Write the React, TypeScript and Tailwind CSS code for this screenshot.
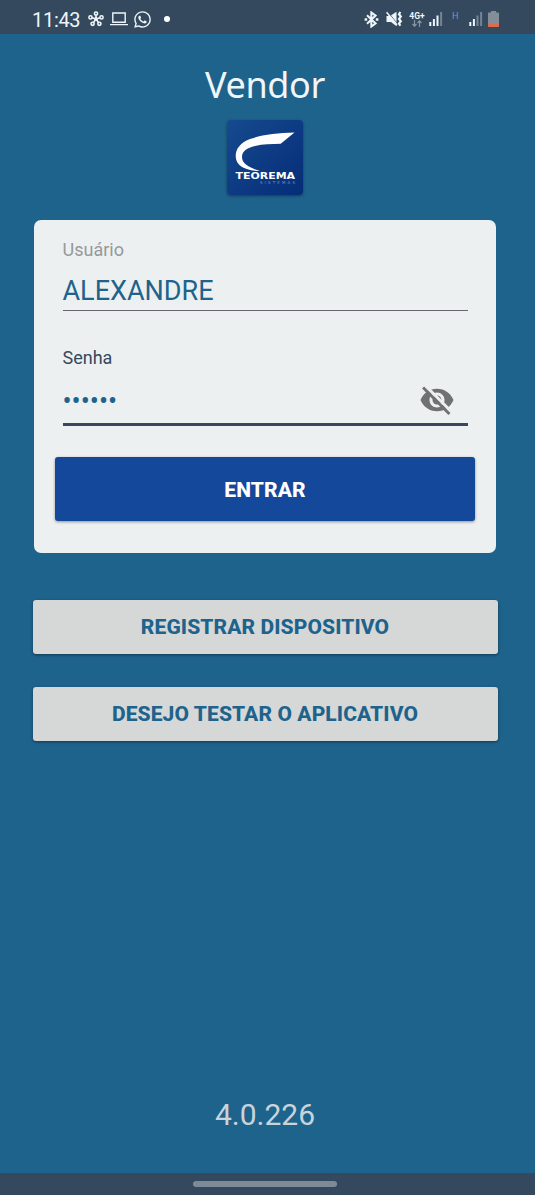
import React, { useState } from 'react';
import { FaWhatsapp } from 'react-icons/fa';

const HubIcon = () => (
  <svg viewBox="0 0 16 16" className="h-4 w-4" fill="none" stroke="currentColor" strokeWidth="1.6">
    <path d="M8 8V4M8 8L4 6.8M8 8l4-1.2M8 8l-2.6 3.6M8 8l2.6 3.6" />
    <circle cx="8" cy="2.6" r="1.6" />
    <circle cx="2.5" cy="6.4" r="1.6" />
    <circle cx="13.5" cy="6.4" r="1.6" />
    <circle cx="4.6" cy="12.8" r="1.6" />
    <circle cx="11.4" cy="12.8" r="1.6" />
    <circle cx="8" cy="8" r="1.8" fill="currentColor" stroke="none" />
  </svg>
);

const LaptopIcon = () => (
  <svg viewBox="0 0 18 14" className="h-3.5 w-[18px]" fill="none" stroke="currentColor" strokeWidth="1.4">
    <path d="M2.8 1h12.4v9.3H2.8zM0 12.6h18" />
  </svg>
);

const BluetoothIcon = () => (
  <svg viewBox="0 0 15 17" className="h-[17px] w-[15px]" fill="none" stroke="currentColor" strokeWidth="2">
    <path d="M3 4.3l8.6 8.1-4.3 3.2V1.4l4.3 3.2L3 12.7" />
    <path d="M.6 8.5h2.6M11.8 8.5h2.6" strokeWidth="2.4" />
  </svg>
);

const MuteVibrateIcon = () => (
  <svg viewBox="0 0 17 16" className="h-4 w-[17px]">
    <path d="M.5 5h3.5L10.5.8v14.4L5 11H.5z" fill="currentColor" />
    <path d="M1.5.5l11 13.5" stroke="#34495e" strokeWidth="0.8" />
    <path d="M.6 1.2l10.4 12.8" stroke="currentColor" strokeWidth="1.5" />
    <path
      d="M14.3 1l-1.3 2.3 1.8 2.3-1.8 2.3 1.8 2.3-1.8 2.3 1.3 2.3"
      fill="none"
      stroke="currentColor"
      strokeWidth="2.2"
    />
  </svg>
);

const SignalIcon = ({ level }: { level: number }) => (
  <svg viewBox="0 0 14 14" className="h-3.5 w-3.5" fill="currentColor">
    {[4, 7, 10.5, 14].map((height, index) => (
      <rect
        key={index}
        x={index * 3.6 + 0.3}
        y={14 - height}
        width="2"
        height={height}
        opacity={index < level ? 1 : 0.35}
      />
    ))}
  </svg>
);

const BatteryIcon = () => (
  <svg viewBox="0 0 11 16" className="h-4 w-[11px]">
    <path d="M3 0h5v1.5h2.2q.8 0 .8.8V13H0V2.3q0-.8.8-.8H3z" fill="#848e98" />
    <path d="M0 13h11v2.2q0 .8-.8.8H.8q-.8 0-.8-.8z" fill="#de6b4b" />
  </svg>
);

const StatusBar = () => (
  <header className="flex h-[34px] items-center bg-[#34495e] pt-1 pl-[32px] text-[#eef5fa]">
    <span className="w-14 pt-0.5 text-[20px] leading-none tracking-[-0.3px]">11:43</span>
    <HubIcon />
    <div className="ml-1.5">
      <LaptopIcon />
    </div>
    <FaWhatsapp className="ml-[5px] h-[19px] w-[19px]" />
    <span className="ml-[12px] h-1.5 w-1.5 rounded-full bg-white" />

    <div className="ml-auto flex items-center pr-[36px]">
      <BluetoothIcon />
      <div className="ml-[7px]">
        <MuteVibrateIcon />
      </div>
      <div className="ml-[6px] flex w-4 flex-col items-center">
        <span className="text-[8.5px] leading-[8px] font-bold">4G+</span>
        <svg viewBox="0 0 10 7" className="h-[7px] w-2.5" fill="none" stroke="#8995a0" strokeWidth="1.2">
          <path d="M2.5 0v6M.5 4l2 2.2 2-2.2M7.5 7V1M5.5 3l2-2.2 2 2.2" />
        </svg>
      </div>
      <div className="ml-1">
        <SignalIcon level={3} />
      </div>
      <span className="mb-1.5 ml-[9px] w-[17px] text-[9px] leading-none text-[#8995a0]">H</span>
      <SignalIcon level={2} />
      <div className="ml-[5px]">
        <BatteryIcon />
      </div>
    </div>
  </header>
);

const Logo = () => (
  <svg viewBox="0 0 76 75" className="h-[75px] w-[76px] rounded-[4px] shadow-[0_1px_3px_rgba(0,0,0,0.4)]">
    <defs>
      <linearGradient id="logo-bg" x1="0" y1="0" x2="1" y2="1">
        <stop offset="0" stopColor="#164a8e" />
        <stop offset="1" stopColor="#052d78" />
      </linearGradient>
    </defs>
    <rect width="76" height="75" fill="url(#logo-bg)" />
    <path
      d="M67.5 12.5C50 13 34 15 23 19C13 23 8.7 29 8.7 36C9 42 11.5 45 16 47.5C21 50 27 51 33 51C23 48 15 44 15 37C15 31 20 28 28 26C36 24 44 24 53.7 23.8Z"
      fill="#fff"
    />
    <text
      x="8.5"
      y="59.2"
      textLength="59.5"
      lengthAdjust="spacingAndGlyphs"
      fill="#fff"
      className="font-['DejaVu_Sans',sans-serif] text-[8px] font-bold"
    >
      TEOREMA
    </text>
    <text x="33" y="64" textLength="35" fill="#6f92c4" className="font-['DejaVu_Sans',sans-serif] text-[4px]">
      SISTEMAS
    </text>
  </svg>
);

const EyeOffIcon = () => (
  <svg viewBox="0 0 24 24" className="h-9 w-9">
    <path
      fill="#6f7172"
      d="M12 4.5C7 4.5 2.73 7.61 1 12c1.73 4.39 6 7.5 11 7.5s9.27-3.11 11-7.5c-1.73-4.39-6-7.5-11-7.5zM12 17c-2.76 0-5-2.24-5-5s2.24-5 5-5 5 2.24 5 5-2.24 5-5 5zM12 9c-1.66 0-3 1.34-3 3s1.34 3 3 3 3-1.34 3-3-1.34-3-3-3z"
    />
    <path d="M4.2 2.4L22 20.2" stroke="#ecf0f1" strokeWidth="2" />
    <path d="M2.7 3.7L20.3 21.3" stroke="#6f7172" strokeWidth="1.9" />
  </svg>
);

const secondaryButton =
  'h-[54px] w-full rounded-[3px] bg-[#d6d7d7] pt-[3px] text-[21px] font-extrabold tracking-[0.1px] text-[#1e638c] shadow-[0_1px_3px_rgba(0,0,0,0.45)]';

const App = () => {
  const [showPassword, setShowPassword] = useState(false);

  return (
    <div className="flex h-[1195px] w-[535px] flex-col overflow-hidden bg-[#1e638c] font-[Roboto,sans-serif]">
      <StatusBar />

      <main className="flex flex-1 flex-col items-center pr-[5px]">
        <h1 className="mt-[25px] h-[51px] font-['Noto_Sans',sans-serif] text-[36px] leading-[52px] tracking-[-0.4px] text-[#f0f6fa]">
          Vendor
        </h1>
        <div className="mt-[9.5px]">
          <Logo />
        </div>

        {/* Login card */}
        <form className="mt-[25px] flex h-[333.5px] w-[462px] flex-col rounded-[7px] bg-[#ecf0f1] px-[21px]">
          <div className="mx-[7.5px] flex h-[91.5px] flex-col border-b border-[#69676d] pt-[19px]">
            <span className="text-[18px] leading-[21px] text-[#95999b]">Usuário</span>
            <span className="mt-[15px] text-[27px] leading-8 text-[#1e638c]">ALEXANDRE</span>
          </div>
          <div className="mx-[7.5px] flex h-[114.5px] flex-col border-b-[3px] border-[#34495e] pt-[36px]">
            <span className="text-[18px] leading-[21px] text-[#34495e]">Senha</span>
            <div className="mt-[13px] flex items-center justify-between pr-[13px]">
              <span className="pt-0.5 text-[27px] leading-9 text-[#1e638c]">{showPassword ? '123456' : '••••••'}</span>
              <button type="button" onClick={() => setShowPassword(!showPassword)} aria-label="Mostrar senha">
                <EyeOffIcon />
              </button>
            </div>
          </div>
          <button
            type="button"
            className="mt-[31.5px] h-16 w-full rounded-[3px] bg-[#14489b] pt-[3px] text-[21px] font-extrabold tracking-[0.1px] text-white shadow-[0_1px_3px_rgba(0,0,0,0.4)]"
          >
            ENTRAR
          </button>
        </form>

        <div className="mt-[46.5px] flex w-[465px] flex-col gap-[33px]">
          <button className={secondaryButton}>REGISTRAR DISPOSITIVO</button>
          <button className={secondaryButton}>DESEJO TESTAR O APLICATIVO</button>
        </div>

        <span className="mt-auto mb-10 text-[30px] leading-9 text-[#c9d3da]">4.0.226</span>
      </main>

      {/* Gesture navigation bar */}
      <footer className="flex h-[22px] items-center justify-center bg-[#34495e] pr-[5px]">
        <span className="h-1.5 w-36 rounded-full bg-[#7c8b97]" />
      </footer>
    </div>
  );
};

export default App;
